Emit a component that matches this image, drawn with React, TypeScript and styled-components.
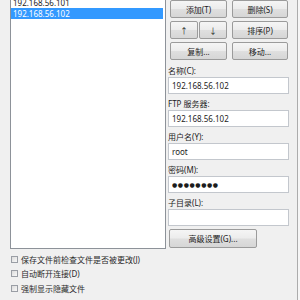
import React from 'react'
import styled, { createGlobalStyle } from 'styled-components'

const GlobalStyle = createGlobalStyle`
  html, body {
    margin: 0;
    padding: 0;
    background: #f0f0f0;
  }
  body {
    font-family: "Noto Sans", "Noto Sans CJK SC", sans-serif;
    font-size: 8px;
    color: #1c1c1c;
  }
`

const hosts = ['192.168.56.101', '192.168.56.102']

const options = [
  '保存文件前检查文件是否被更改(J)',
  '自动断开连接(D)',
  '强制显示隐藏文件',
]

interface IFieldProps {
  label: string
  value: string
  masked?: boolean
}

const FieldGroup: React.FC<IFieldProps> = (props: IFieldProps) => {
  return (
    <>
      <Label>{props.label}</Label>
      <TextBox readOnly value={props.value} $masked={props.masked} />
    </>
  )
}

export default function App() {
  const selected = 1

  return (
    <>
      <GlobalStyle />
      <Frame>
        <LeftColumn>
          <ListBox>
            {hosts.map((host, index) => (
              <ListItem key={index} $selected={index === selected}>{host}</ListItem>
            ))}
          </ListBox>
          <Options>
            {options.map((text, index) => (
              <OptionRow key={index}>
                <CheckBox />
                <span>{text}</span>
              </OptionRow>
            ))}
          </Options>
        </LeftColumn>

        <RightPanel>
          <ButtonGrid>
            <Button>添加(T)</Button>
            <Button>删除(S)</Button>
            <ArrowPair>
              <Button>↑</Button>
              <Button>↓</Button>
            </ArrowPair>
            <Button>排序(P)</Button>
            <Button>复制...</Button>
            <Button>移动...</Button>
          </ButtonGrid>

          <Fields>
            <FieldGroup label='名称(C):' value='192.168.56.102' />
            <FieldGroup label='FTP 服务器:' value='192.168.56.102' />
            <FieldGroup label='用户名(Y):' value='root' />
            <FieldGroup label='密码(M):' value='●●●●●●●●' masked />
            <FieldGroup label='子目录(L):' value='' />
          </Fields>

          <WideButton>高级设置(G)...</WideButton>
        </RightPanel>
        <Outside />
      </Frame>
    </>
  )
}

const Frame = styled.div`
  display: flex;
  width: 300px;
  height: 300px;
  overflow: hidden;
  background: #f0f0f0;
`

const LeftColumn = styled.div`
  display: flex;
  flex-direction: column;
  width: 156px;
  padding-left: 10px;
  flex-shrink: 0;
`

const ListBox = styled.div`
  height: 249px;
  box-sizing: border-box;
  background: #fff;
  border: 1px solid #8d9299;
  border-top: none;
  padding: 0 2px 0 0;
  overflow: hidden;
  flex-shrink: 0;
`

const ListItem = styled.div<{ $selected?: boolean }>`
  height: 11px;
  line-height: 11px;
  padding-left: 2px;
  white-space: nowrap;
  color: ${p => (p.$selected ? '#fff' : '#1c1c1c')};
  background: ${p => (p.$selected ? '#3399ff' : 'transparent')};

  &:first-child {
    margin-top: -3px;
  }
`

const Options = styled.div`
  display: flex;
  flex-direction: column;
  margin-top: 3px;
`

const OptionRow = styled.div`
  display: flex;
  align-items: center;
  gap: 3px;
  height: 14.5px;
  padding-left: 1px;
  white-space: nowrap;
  color: #2a2a2a;
`

const CheckBox = styled.span`
  width: 7px;
  height: 7px;
  box-sizing: border-box;
  border: 1px solid #9a9ea5;
  background: linear-gradient(135deg, #dcdcdc, #f8f8f8);
  flex-shrink: 0;
`

const RightPanel = styled.div`
  display: flex;
  flex-direction: column;
  width: 132px;
  box-sizing: border-box;
  padding: 0 8px 0 2px;
  border-right: 1px solid #acacac;
  flex-shrink: 0;
`

const Outside = styled.div`
  flex: 1;
  background: #f6f6f6;
`

const ButtonGrid = styled.div`
  display: grid;
  grid-template-columns: 57px 56px;
  grid-auto-rows: 18px;
  column-gap: 5px;
  row-gap: 3px;
  margin-left: 2px;
`

const ArrowPair = styled.div`
  display: grid;
  grid-template-columns: 1fr 1fr;
  gap: 1px;
`

const Button = styled.div`
  display: flex;
  align-items: center;
  justify-content: center;
  box-sizing: border-box;
  border: 1px solid #9b9b9b;
  border-radius: 2px;
  background: linear-gradient(#f5f5f5, #ececec 48%, #dfdfdf 52%, #d6d6d6);
  color: #1c1c1c;
  white-space: nowrap;
`

const WideButton = styled(Button)`
  width: 88px;
  height: 19px;
  margin-left: 1px;
`

const Fields = styled.div`
  display: flex;
  flex-direction: column;
  margin-top: 4px;
`

const Label = styled.div`
  height: 13px;
  line-height: 13px;
  white-space: nowrap;
`

const TextBox = styled.input<{ $masked?: boolean }>`
  display: block;
  width: 121px;
  height: 17px;
  box-sizing: border-box;
  margin: 0 0 3px 0;
  padding: 0 3px;
  border: 1px solid #c3c7cd;
  border-radius: 0;
  background: #fff;
  outline: none;
  color: #1c1c1c;
  font-family: ${p => (p.$masked ? '"DejaVu Sans", sans-serif' : '"Noto Sans", "Noto Sans CJK SC", sans-serif')};
  font-size: ${p => (p.$masked ? '6px' : '8px')};
  letter-spacing: ${p => (p.$masked ? '0.6px' : '0')};
`
